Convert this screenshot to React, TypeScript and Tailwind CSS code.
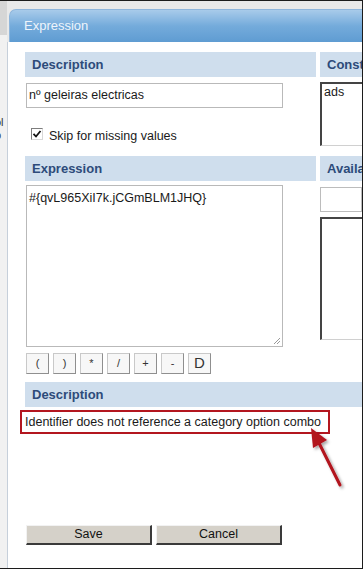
import React from 'react';

const bar = 'h-[25px] bg-[#cfdeed] flex items-center pl-[7px] text-[13px] font-bold text-[#2d4b7a] whitespace-nowrap overflow-hidden';

const OpButton: React.FC<{ label: string; big?: boolean }> = ({ label, big }) => (
  <div
    className={`w-[23px] h-[21px] flex items-center justify-center bg-[#f7f7f7] border border-[#c9c9c9] border-r-[#8f8f8f] border-b-[#8f8f8f] text-[#333] ${
      big ? 'text-[15px]' : 'text-[11px]'
    }`}
  >
    {label}
  </div>
);

const ClassicButton: React.FC<{ label: string }> = ({ label }) => (
  <div className="w-[126px] h-[20px] flex items-center justify-center bg-[#d5d1c9] border-t border-l border-t-[#f2f2f2] border-l-[#f2f2f2] border-b-2 border-r-2 border-b-[#3a3a3a] border-r-[#3a3a3a] text-[12.5px] text-[#111]">
    {label}
  </div>
);

export default function App() {
  const ops = ['(', ')', '*', '/', '+', '-'];

  return (
    <div className="relative w-[363px] h-[569px] overflow-hidden flex bg-[#ececec] border-t border-r border-b border-[#1c1c1c] font-['Liberation_Sans',Arial,sans-serif] text-[#1a1a1a]">
      {/* page behind the dialog */}
      <div className="w-[7px] shrink-0 flex flex-col">
        <div className="h-[34px] bg-[#d6d6d6]" />
        <div className="flex-1 bg-[#f1f1f1] overflow-hidden text-[11px] leading-[13px] text-[#333]">
          <div className="mt-[81px] -ml-[5px]">ol</div>
          <div className="-ml-[5px]">b</div>
        </div>
      </div>

      {/* dialog */}
      <div className="flex-1 min-w-0 flex flex-col">
        <div className="pt-[8px] pl-[2px] bg-[#e9e9e9]">
          <div className="h-[33px] rounded-tl-[7px] bg-gradient-to-b from-[#a8cbea] via-[#74abdb] to-[#5f9cd2] border-t border-l border-[#8fb6dc] flex items-center pl-[14px] text-[13px] text-[#eef4fb]">
            Expression
          </div>
        </div>

        <div className="flex-1 bg-white border-l border-[#c6cfda] pl-[17px] pt-[10px] flex flex-col">
          {/* section 1 */}
          <div className="flex gap-[4px]">
            <div className="w-[291px] shrink-0">
              <div className={bar}>Description</div>
              <div className="mt-[6px] ml-[1px] w-[257px] h-[25px] border border-[#b9b9b9] flex items-center pl-[2px] text-[12.5px]">
                nº geleiras electricas
              </div>
              <div className="h-[48px] pt-[20px] pl-[6px] flex items-start">
                <span className="w-[12px] h-[12px] bg-white border border-t-[#7d7d7d] border-l-[#7d7d7d] border-b-[#d8d8d8] border-r-[#d8d8d8] flex items-center justify-center">
                  <svg width="10" height="10" viewBox="0 0 10 10">
                    <path d="M1.5 4.8 L4 7.5 L8.5 2" stroke="#111" strokeWidth="1.8" fill="none" />
                  </svg>
                </span>
                <span className="ml-[6px] text-[12.5px] leading-[16px]">Skip for missing values</span>
              </div>
            </div>
            <div className="flex-1 min-w-0">
              <div className={bar}>Constants</div>
              <div className="mt-[5px] h-[64px] border-l-2 border-t-2 border-[#444] border-b border-b-[#d0d0d0] pl-[2px] text-[12.5px] leading-[16px]">
                ads
              </div>
            </div>
          </div>

          {/* section 2 */}
          <div className="flex gap-[4px]">
            <div className="w-[291px] shrink-0">
              <div className={`${bar} h-[24px]`}>Expression</div>
              <div className="relative mt-[4px] ml-[1px] w-[257px] h-[162px] border border-[#b9b9b9] pl-[2px] pt-[5px] text-[12.5px] leading-[14px]">
                #{'{'}qvL965XiI7k.jCGmBLM1JHQ{'}'}
                <svg className="absolute right-[1px] bottom-[1px]" width="9" height="9" viewBox="0 0 9 9">
                  <path d="M8 2 L2 8 M8 5 L5 8" stroke="#9a9a9a" strokeWidth="1" />
                </svg>
              </div>
              <div className="mt-[6px] ml-[1px] flex gap-[4px]">
                {ops.map((o) => (
                  <OpButton key={o} label={o} />
                ))}
                <OpButton label="D" big />
              </div>
            </div>
            <div className="flex-1 min-w-0">
              <div className={`${bar} h-[24px]`}>Available</div>
              <div className="mt-[6px] h-[25px] border border-[#bcbcbc]" />
              <div className="mt-[5px] h-[123px] border-l-2 border-t-2 border-[#444] border-b border-b-[#d0d0d0]" />
            </div>
          </div>

          {/* validation description */}
          <div className={`${bar} h-[24px] mt-[8px]`}>Description</div>
          <div className="mt-[3px] -ml-[5px] w-[310px] h-[24px] border-2 border-[#b3161f] flex items-center pl-[3px] text-[12.5px] whitespace-nowrap">
            Identifier does not reference a category option combo
          </div>

          <div className="mt-[91px] ml-[1px] flex gap-[4px]">
            <ClassicButton label="Save" />
            <ClassicButton label="Cancel" />
          </div>
        </div>
      </div>

      {/* annotation arrow */}
      <svg className="absolute left-0 top-0 pointer-events-none" width="363" height="569" viewBox="0 0 363 569">
        <defs>
          <filter id="sh" x="-50%" y="-50%" width="200%" height="200%">
            <feDropShadow dx="2" dy="2" stdDeviation="1.5" floodColor="#000" floodOpacity="0.35" />
          </filter>
        </defs>
        <g filter="url(#sh)">
          <line x1="340" y1="484" x2="318" y2="440" stroke="#b2121f" strokeWidth="3" strokeLinecap="round" />
          <polygon points="311,427 327,439 313,447" fill="#b2121f" />
        </g>
      </svg>
    </div>
  );
}
